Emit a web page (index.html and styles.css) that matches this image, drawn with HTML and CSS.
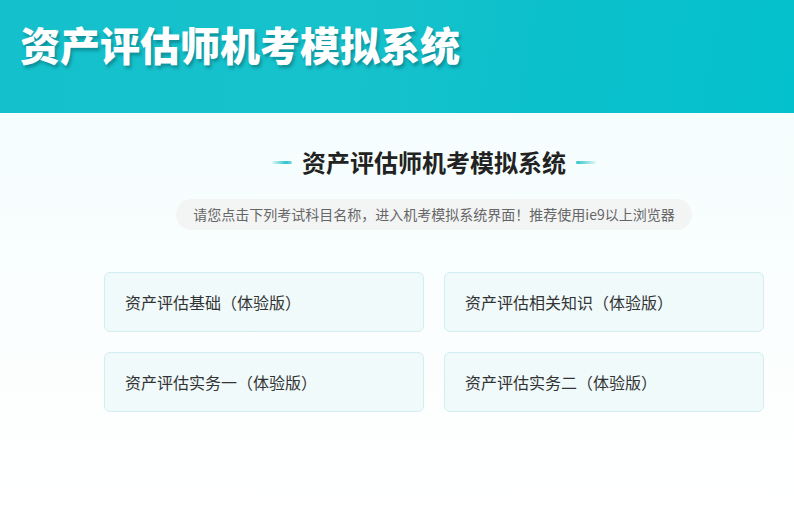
FILE: index.html
```html
<!DOCTYPE html>
<html lang="zh-CN">
<head>
<meta charset="utf-8">
<title>资产评估师机考模拟系统</title>
<link rel="stylesheet" href="styles.css">
</head>
<body>
<header class="top">
  <h1 class="brand">资产评估师机考模拟系统</h1>
</header>
<main class="main">
  <div class="wrap">
    <h2 class="heading"><span class="dash dash-l"></span>资产评估师机考模拟系统<span class="dash dash-r"></span></h2>
    <p class="notice">请您点击下列考试科目名称，进入机考模拟系统界面！推荐使用ie9以上浏览器</p>
    <div class="grid">
      <a class="card">资产评估基础（体验版）</a>
      <a class="card">资产评估相关知识（体验版）</a>
      <a class="card">资产评估实务一（体验版）</a>
      <a class="card">资产评估实务二（体验版）</a>
    </div>
  </div>
</main>
</body>
</html>
```
FILE: styles.css
```css
* { box-sizing: border-box; }
html, body { margin: 0; padding: 0; }
body {
  font-family: "Noto Sans CJK SC", "Noto Sans", sans-serif;
  background: linear-gradient(180deg, #f1fdfe 0%, #fbfefe 60%, #ffffff 100%);
  min-height: 522px;
  color: #333;
}
.top {
  height: 113px;
  background: linear-gradient(100deg, #14c0cb 0%, #16c2cc 45%, #0bc0cb 70%, #03c1cc 100%);
  padding: 14px 0 0 20px;
}
.brand {
  margin: 0;
  font-size: 40px;
  line-height: 60px;
  font-weight: 900;
  letter-spacing: 0;
  color: #fff;
  text-shadow: 2px 3px 3px rgba(0, 60, 70, 0.35);
}
.main { padding-top: 34px; }
.wrap {
  width: 660px;
  margin-left: 104px;
  display: flex;
  flex-direction: column;
  align-items: center;
}
.heading {
  margin: 0;
  font-size: 24px;
  line-height: 30px;
  font-weight: 700;
  letter-spacing: 0;
  color: #222;
  display: flex;
  align-items: center;
  gap: 10px;
}
.dash {
  display: block;
  width: 20px;
  height: 3px;
  border-radius: 2px;
}
.dash-l { background: linear-gradient(90deg, rgba(18,190,200,0.1), #2ec3cc 70%, #7dd9df); }
.dash-r { background: linear-gradient(90deg, #2ec3cc, rgba(18,190,200,0.1)); }
.notice {
  margin: 22px 0 0;
  height: 31px;
  line-height: 31px;
  padding: 0 17px;
  border-radius: 16px;
  background: #f3f5f5;
  font-size: 14px;
  color: #666;
}
.grid {
  margin-top: 42px;
  width: 100%;
  display: grid;
  grid-template-columns: 320px 320px;
  gap: 20px 20px;
}
.card {
  display: flex;
  align-items: center;
  height: 60px;
  padding-left: 20px;
  border: 1px solid #d3eef0;
  border-radius: 6px;
  background: #f0fafb;
  font-size: 16px;
  color: #333;
  cursor: pointer;
}
```
